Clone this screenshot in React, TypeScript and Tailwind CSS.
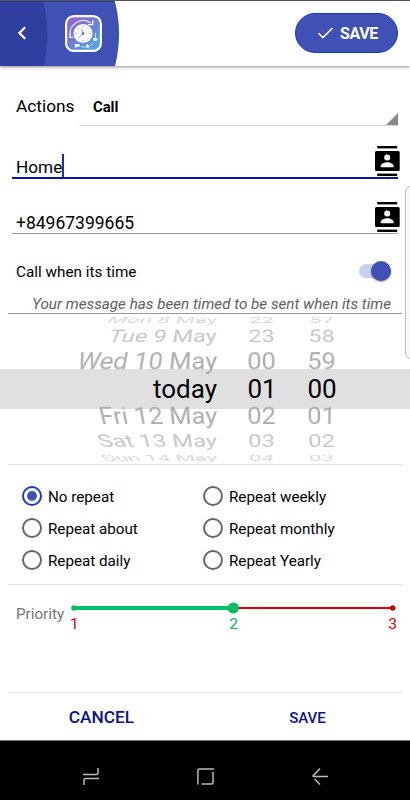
import React from 'react';

function ContactsIcon({ place }: { place: string }) {
  return (
    <svg className={`absolute right-[-2px] h-[30px] w-[25px] ${place}`} viewBox="0 0 25 30">
      <rect x="2.2" y="0" width="20" height="2.4" fill="#000" />
      <rect x="2.2" y="27.6" width="20" height="2.4" fill="#000" />
      <rect x="0" y="5" width="24.700" height="20" rx="1.6" fill="#000" />
      <circle cx="12.2" cy="11.4" r="3" fill="#fff" />
      <path d="M5.8 21.3v-1.4c0-2.4 4.2-3.6 6.4-3.6s6.4 1.2 6.4 3.6v1.4z" fill="#fff" />
    </svg>
  );
}

function AppLogo() {
  return (
    <svg className="h-[37px] w-[37px]" viewBox="0 0 38 38">
      <defs>
        <linearGradient id="logo" x1="0" y1="0" x2="1" y2="1">
          <stop offset="0" stopColor="#a060c8" />
          <stop offset="0.5" stopColor="#6a7fd6" />
          <stop offset="1" stopColor="#4fb0ea" />
        </linearGradient>
      </defs>
      <rect x="1.1" y="1.1" width="35.8" height="35.8" rx="8" fill="url(#logo)" stroke="#fff" strokeWidth="2.2" />
      <path d="M5.3 22A13.8 13.8 0 0 1 26.800 8.300" fill="none" stroke="#e4e4fa" strokeWidth="1.3" />
      <path d="M23.500 9.800h5v-4.500" fill="none" stroke="#fff" strokeWidth="1.3" />
      <path d="M4 23h4.500M5.500 19v3.500" stroke="#dfe2fa" strokeWidth="1.2" />
      <circle cx="18.500" cy="19" r="9.800" fill="#fff" />
      <path d="M18.500 11v1.500M18.500 25.500v1.500M10.500 19h1.500M25 19h1.500M12.800 13.300l1 1M24.200 13.300l-1 1M24.200 24.700l-1-1M18.500 19l-5 5M18.500 19l-1.500-5" stroke="#7e8bcd" strokeWidth="0.9" />
      <circle cx="18.500" cy="19" r="1.500" fill="#6877c4" />
      <path d="M10 29.800h5v2.800h-3l-1.500 1.500zM21 33.300c.8-1 .6-3.300 2-3.300s1.200 2.300 2 3.300z" fill="#fff" />
      <path d="M16.500 32.500l4 .4M26 31.500l3-2.500M31.300 18.500v5" stroke="#d9ecfb" strokeWidth="1" />
      <path d="M28.300 23.500h5.500l-1.500 3.300h-2.500z" fill="#d9ecfb" />
    </svg>
  );
}

function Header() {
  return (
    <header className="relative z-10 flex h-[66px] items-center justify-between border-t-[1px] border-[#555] bg-white pr-3 shadow-[0_1px_3px_rgba(0,0,0,0.45)]">
      <svg className="absolute left-0 top-0 h-[65px] w-[120px]" viewBox="0 0 120 65">
        <path d="M0 0H114.800Q123.200 32 115 65H0z" fill="#3f51b5" />
        <path d="M0 0H43Q51.500 32 43.500 65H0z" fill="#303f9f" />
        <path d="M0 0H115" stroke="#263078" strokeWidth="1" />
      </svg>
      <div className="relative flex items-center">
        <svg className="ml-[17px] mt-[-1px] h-[14px] w-[10px]" viewBox="0 0 10 14">
          <path d="M8.200 1.200L2.400 7l5.800 5.800" fill="none" stroke="#fff" strokeWidth="2.200" />
        </svg>
        <div className="ml-[38px] mt-[-1px]">
          <AppLogo />
        </div>
      </div>
      <button className="mt-[-1px] flex h-[40px] w-[103px] items-center rounded-full border border-[#1a3ab4] bg-[#3f51b5] pl-[21px] text-[16px] font-bold text-white">
        <svg className="mr-[7px] h-[12px] w-[16px]" viewBox="0 0 16 12">
          <path d="M1.500 6.200L5.900 10.600L15.500 1" fill="none" stroke="#fff" strokeWidth="1.500" />
        </svg>
        <span className="pt-px tracking-[-0.4px]">SAVE</span>
      </button>
    </header>
  );
}

const wheelRows = [
  { date: 'Mon 8 May', hour: '22', minute: '57', row: 'h-[10px] text-[#d9d9d9]', tilt: '[transform:perspective(300px)_rotateX(69deg)_scale(0.85,0.9)]' },
  { date: 'Tue 9 May', hour: '23', minute: '58', row: 'h-[22px] text-[#c6c6c6]', tilt: '[transform:perspective(240px)_rotateX(43deg)_scale(0.905)]' },
  { date: 'Wed 10 May', hour: '00', minute: '59', row: 'h-[28px] text-[#adadad]', tilt: '[transform:perspective(200px)_rotateX(23deg)_scale(0.98)]' },
  { date: 'today', hour: '01', minute: '00', row: 'h-[27px] text-black', tilt: '' },
  { date: 'Fri 12 May', hour: '02', minute: '01', row: 'h-[28px] text-[#adadad]', tilt: '[transform:perspective(200px)_rotateX(-23deg)_scale(0.98)]' },
  { date: 'Sat 13 May', hour: '03', minute: '02', row: 'h-[22px] text-[#c6c6c6]', tilt: '[transform:perspective(240px)_rotateX(-43deg)_scale(0.92,0.905)]' },
  { date: 'Sun 14 May', hour: '04', minute: '03', row: 'h-[12px] text-[#d9d9d9]', tilt: '[transform:perspective(300px)_rotateX(-69deg)_scale(0.85,0.9)]' },
];

function Wheel() {
  return (
    <section className="relative h-[150px] pt-px">
      <div className="absolute inset-x-0 top-[55px] h-[40px] bg-[#e0e0e0]" />
      <div className="relative text-[26px] leading-none">
        {wheelRows.map((r) => (
          <div key={r.date} className={`grid grid-cols-[217px_90px_30px] content-center whitespace-nowrap ${r.row}`}>
            <span className={`origin-right justify-self-end ${r.tilt}`}>{r.date}</span>
            <span className={`origin-center justify-self-center ${r.tilt}`}>{r.hour}</span>
            <span className={`origin-center justify-self-center ${r.tilt}`}>{r.minute}</span>
          </div>
        ))}
      </div>
    </section>
  );
}

function Radio({ label, on = false }: { label: string; on?: boolean }) {
  return (
    <label className="flex h-8 items-center text-[15.2px]">
      <span className={`mr-[6px] flex size-5 items-center justify-center rounded-full border-2 ${on ? 'border-[#1f3ab5]' : 'border-[#666]'}`}>
        {on && <span className="size-[10px] rounded-full bg-[#3f51b5]" />}
      </span>
      <span className="pt-[2px]">{label}</span>
    </label>
  );
}

export default function App() {
  return (
    <div className="relative flex h-[800px] w-[410px] flex-col overflow-hidden bg-white font-[Roboto,sans-serif] text-black">
      <Header />

      <div className="ml-4 mr-3 flex h-[60px] items-stretch">
        <div className="w-[63px] pt-[27px] text-[17.3px] leading-[26px]">Actions</div>
        <div className="relative flex-1 border-b border-[#d8d8d8] pl-[14px] pt-[28px] text-[14.800px] font-bold leading-[26px]">
          Call
          <span className="absolute bottom-0 right-0 size-3 bg-[#888] [clip-path:polygon(100%_0,100%_100%,0_100%)]" />
        </div>
      </div>

      <div className="relative mx-3 flex h-[53px] items-end border-b-2 border-[#0a14a0] pl-1 text-[17.2px]">
        <span className="leading-[20px]">Home</span>
        <span className="h-[23px] w-[1.500px] bg-[#1d2fae]" />
        <ContactsIcon place="top-[20px]" />
      </div>
      <div className="relative mx-3 flex h-[55px] items-end border-b border-[#999] pl-1 text-[17.5px]">
        <span className="leading-[20px]">+84967399665</span>
        <ContactsIcon place="top-[23px]" />
      </div>

      <div className="ml-4 mr-[19px] flex h-[74px] items-center justify-between text-[15.3px]">
        <span className="pt-[2px]">Call when its time</span>
        <span className="flex h-[14px] w-[32px] items-center justify-end rounded-full bg-[#c9cfec]">
          <span className="size-5 shrink-0 rounded-full bg-[#3f51b5] shadow-[0_1px_2px_rgba(0,0,0,0.4)]" />
        </span>
      </div>
      <div className="mx-2 mt-[-15px] h-[21px] border-b border-[#999] pr-[11px] text-right text-[15.22px] italic leading-[22px] text-[#606060]">
        Your message has been timed to be sent when its time
      </div>

      <Wheel />

      <div className="mx-2 grid h-[121px] grid-cols-[181px_1fr] content-start border-b border-t border-[#e0e0e0] pl-[14px] pt-[15px]">
        <Radio label="No repeat" on />
        <Radio label="Repeat weekly" />
        <Radio label="Repeat about" />
        <Radio label="Repeat monthly" />
        <Radio label="Repeat daily" />
        <Radio label="Repeat Yearly" />
      </div>

      <div className="mx-2 flex h-[108px] border-b border-[#e0e0e0] pl-2 pt-[17px]">
        <span className="w-[54px] pt-[2px] text-[15.2px] leading-[20px] text-[#757575]">Priority</span>
        <div className="w-[326px]">
          <svg className="block h-[12px] w-[326px]" viewBox="0 0 326 12">
            <path d="M163 6H323" stroke="#d50000" strokeWidth="2" />
            <path d="M4 6H163" stroke="#00c065" strokeWidth="4" />
            <circle cx="4" cy="6" r="2.800" fill="#00c065" />
            <circle cx="163.300" cy="6" r="5.600" fill="#00c065" />
            <circle cx="322.700" cy="6" r="2.800" fill="#d50000" />
          </svg>
          <div className="mr-[-1px] flex justify-between pt-px text-[15.5px] leading-[19px] text-[#d50000]">
            <span>1</span>
            <span className="text-[#00b84f]">2</span>
            <span>3</span>
          </div>
        </div>
      </div>

      <div className="grid h-[48px] grid-cols-2 items-center border-b border-[#777] text-center font-medium text-[#0a1290]">
        <button className="pr-[2px] pt-[2px] text-[17.3px]">CANCEL</button>
        <button className="pt-[3px] text-[15px]">SAVE</button>
      </div>

      <nav className="flex flex-1 items-start bg-black">
        <svg className="ml-[82px] mt-[26px] h-[20px] w-[18px]" viewBox="0 0 18 20" fill="none" stroke="#bbb" strokeWidth="1.500">
          <path d="M1 7.500H14.500Q16 7.500 16 6V1M17 11.500H3.500Q2 11.500 2 13V18" />
        </svg>
        <svg className="ml-[96px] mt-[26px] h-[20px] w-[18px]" viewBox="0 0 18 20" fill="none" stroke="#bbb" strokeWidth="1.500">
          <path d="M1.900 17.500V3.500Q1.900 2 3.400 2H18M17 5V15.500Q17 17 15.500 17H5.500" />
        </svg>
        <svg className="ml-[97px] mt-[26px] h-[20px] w-[18px]" viewBox="0 0 18 20" fill="none" stroke="#bbb" strokeWidth="1.500">
          <path d="M17 9.500H2M9 1.500L1.500 9.500M3.500 12L9 17.500" />
        </svg>
      </nav>

      <div className="absolute right-[-8px] top-[186px] h-[173px] w-[13px] rounded-l-md border border-[#bbb] bg-[#f8f8f8]" />
    </div>
  );
}
